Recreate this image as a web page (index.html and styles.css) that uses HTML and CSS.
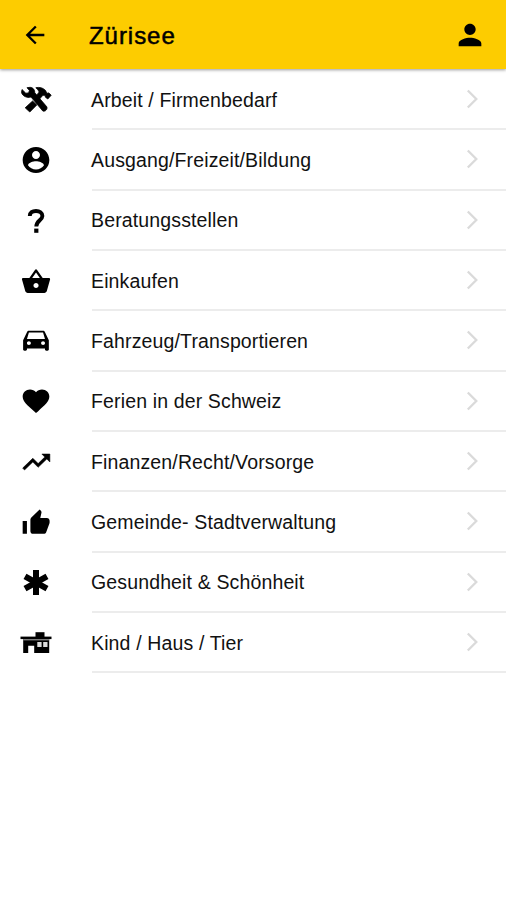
FILE: index.html
```html
<!DOCTYPE html>
<html lang="de">
<head>
    <meta charset="UTF-8">
    <meta name="viewport" content="width=device-width, initial-scale=1.0">
    <title>Zürisee</title>
    <link rel="stylesheet" href="styles.css">
</head>
<body>
    <svg class="sprite" aria-hidden="true">
        <symbol id="chevron" viewBox="0 0 12 20">
            <path d="M1.8 1.5L10.3 10L1.8 18.5" fill="none" stroke="#dadada" stroke-width="2.3"/>
        </symbol>
    </svg>

    <header class="toolbar">
        <svg class="back" viewBox="0 0 24 24"><path d="M20 11H7.83l5.59-5.59L12 4l-8 8 8 8 1.41-1.41L7.83 13H20v-2z"/></svg>
        <h1>Zürisee</h1>
        <svg class="profile" viewBox="0 0 24 24"><path d="M12 12c2.21 0 4-1.79 4-4s-1.79-4-4-4-4 1.79-4 4 1.79 4 4 4zm0 2c-2.67 0-8 1.34-8 4v2h16v-2c0-2.66-5.33-4-8-4z"/></svg>
    </header>

    <ul class="categories">
        <li>
            <svg class="icon" viewBox="0 0 32 32">
                <g stroke="#000" stroke-width=".8" stroke-linejoin="round">
                    <path d="M7 3.7L10.200 3.300C13 3.600 15 5.800 14.800 8.800L26.800 22.800C27.800 24.800 25.600 28 22.800 27L11 13C7 14.400 2.400 12 1.500 8.500L2 5.500L5.800 9.200L8.600 8.900L9.400 6.400z"/>
                    <path d="M12.600 17L16.800 20.900L9.800 28L5.200 23.800z"/>
                    <path d="M15.800 3.700C20 2.900 22.800 3.700 25.600 6.500L26.800 9.300L28.800 8.900L31.200 11.200L27.800 15L25.200 13L25.400 11.400L23 11.200L19 15.600L16 12L19.200 8C18.400 6.200 17.400 4.800 15.800 3.700z"/>
                </g>
            </svg>
            <span class="label">Arbeit / Firmenbedarf</span>
            <svg class="chevron"><use href="#chevron"/></svg>
        </li>
        <li>
            <svg class="icon" viewBox="0 0 24 24"><path d="M12 2.200C6.480 2.200 2 6.480 2 12s4.480 9.800 10 9.800 10-4.280 10-9.800S17.520 2.200 12 2.200zm0 3c1.660 0 3 1.340 3 3s-1.340 3-3 3-3-1.340-3-3 1.340-3 3-3zm0 14c-2.500 0-4.710-1.280-6-3.220.03-1.990 4-3.080 6-3.080 1.990 0 5.970 1.090 6 3.080-1.290 1.940-3.500 3.220-6 3.220z"/></svg>
            <span class="label">Ausgang/Freizeit/Bildung</span>
            <svg class="chevron"><use href="#chevron"/></svg>
        </li>
        <li>
            <svg class="icon" viewBox="0 0 32 32">
                <path d="M9.800 11C9.800 7.400 12.400 6 16 6S22.400 7.800 22.400 11C22.400 15 16.300 15.800 16.300 21.400" fill="none" stroke="#000" stroke-width="3.900"/>
                <path d="M14.200 23.600h4.200v4.200h-4.200z"/>
            </svg>
            <span class="label">Beratungsstellen</span>
            <svg class="chevron"><use href="#chevron"/></svg>
        </li>
        <li>
            <svg class="icon" viewBox="0 0 24 24"><path transform="translate(.5 1.400) scale(.96 .93)" d="M17.210 9l-4.380-6.560c-.19-.28-.51-.42-.83-.42-.32 0-.64.14-.83.43L6.790 9H2c-.55 0-1 .45-1 1 0 .09.01.18.04.27l2.540 9.270c.23.84 1 1.460 1.920 1.460h13c.92 0 1.690-.62 1.930-1.460l2.540-9.270L23 10c0-.55-.45-1-1-1h-4.790zM9 9l3-4.400L15 9H9zm3 8c-1.100 0-2-.9-2-2s.9-2 2-2 2 .9 2 2-.9 2-2 2z"/></svg>
            <span class="label">Einkaufen</span>
            <svg class="chevron"><use href="#chevron"/></svg>
        </li>
        <li>
            <svg class="icon" viewBox="0 0 24 24"><path transform="translate(.4 2.600) scale(.965 .88)" d="M18.920 3.010C18.720 2.420 18.160 2 17.500 2h-11c-.66 0-1.210.42-1.420 1.010L2 10v8c0 .55.45 1 1 1h1c.55 0 1-.45 1-1v-1h14v1c0 .55.45 1 1 1h1c.55 0 1-.45 1-1v-8l-3.080-6.990zM6.500 14c-.83 0-1.500-.67-1.500-1.500S5.670 11 6.500 11s1.500.67 1.500 1.500S7.330 14 6.500 14zm11 0c-.83 0-1.500-.67-1.500-1.500s.67-1.500 1.500-1.500 1.500.67 1.500 1.500-.67 1.500-1.500 1.500zM5 9l1.500-5.500h11L19 9H5z"/></svg>
            <span class="label">Fahrzeug/Transportieren</span>
            <svg class="chevron"><use href="#chevron"/></svg>
        </li>
        <li>
            <svg class="icon" viewBox="0 0 24 24"><path d="M12 21.350l-1.450-1.320C5.400 15.360 2 12.280 2 8.500 2 5.420 4.420 3 7.500 3c1.740 0 3.410.81 4.500 2.090C13.090 3.810 14.760 3 16.500 3 19.580 3 22 5.420 22 8.500c0 3.780-3.400 6.860-8.550 11.540L12 21.350z" transform="translate(0 -.2) scale(1 .96)"/></svg>
            <span class="label">Ferien in der Schweiz</span>
            <svg class="chevron"><use href="#chevron"/></svg>
        </li>
        <li>
            <svg class="icon" viewBox="0 0 24 24"><path d="M16.400 6l2.200 2.290-4.990 4.880-4-4L2 16.590 3.410 18l6.200-6 4 4 6.500-6.290L22.400 12V6z" stroke="#000" stroke-width=".4"/></svg>
            <span class="label">Finanzen/Recht/Vorsorge</span>
            <svg class="chevron"><use href="#chevron"/></svg>
        </li>
        <li>
            <svg class="icon" viewBox="0 0 24 24"><path d="M2 20.900h3.200V11.300H2v9.600zM22.200 11c0-1.100-.9-2-2-2h-5l.9-4 .03-.32c0-.41-.17-.79-.44-1.060L14.700 2.700 8.500 8.700C8.100 9.100 7.800 9.600 7.800 10.100v8.800c0 1.100.9 2 2 2h8c.83 0 1.540-.5 1.840-1.220l2.420-6.550c.09-.23.14-.47.14-.73V11z"/></svg>
            <span class="label">Gemeinde- Stadtverwaltung</span>
            <svg class="chevron"><use href="#chevron"/></svg>
        </li>
        <li>
            <svg class="icon" viewBox="0 0 32 32"><path d="M16 3v25M5 9.300l22 12.400M27 9.300L5 21.700" stroke="#000" stroke-width="6"/></svg>
            <span class="label">Gesundheit &amp; Schönheit</span>
            <svg class="chevron"><use href="#chevron"/></svg>
        </li>
        <li>
            <svg class="icon" viewBox="0 0 32 32">
                <path d="M15.500 5.200h9v5h-9z"/>
                <path d="M.5 9.600h31v2.500H.5z"/>
                <path d="M3.200 12h26v14H14.200v-7.200H8.200V26h-5z"/>
                <path d="M3.200 12.100h26v1.300h-26z" fill="#888"/>
                <path d="M17.300 15h4.300v5h-4.300zM23.200 15h4.300v5h-4.300z" fill="#ddd"/>
            </svg>
            <span class="label">Kind / Haus / Tier</span>
            <svg class="chevron"><use href="#chevron"/></svg>
        </li>
    </ul>
</body>
</html>
```

FILE: styles.css
```css
body {
    margin: 0;
    background: #fff;
    color: #000;
    font-family: "Liberation Sans", Arial, sans-serif;
}

.sprite {
    display: none;
}

.toolbar {
    display: flex;
    align-items: center;
    height: 69px;
    padding: 0 19px 0 21px;
    box-sizing: border-box;
    background: #fdcc00;
    box-shadow: 0 1px 3px rgba(0, 0, 0, 0.4);
}

.toolbar h1 {
    flex: 1;
    margin: 3px 0 0 40px;
    font-size: 24px;
    font-weight: normal;
    letter-spacing: 0.95px;
    -webkit-text-stroke: 0.5px #000;
}

.back {
    width: 28px;
    height: 28px;
}

.profile {
    width: 34px;
    height: 34px;
}

.categories {
    margin: 1px 0 0;
    padding: 0;
    list-style: none;
}

.categories li {
    display: grid;
    grid-template-columns: 72px 1fr 40px;
    grid-template-rows: 1fr 2px;
    align-items: center;
    height: 60.33px;
    padding-left: 20px;
}

.categories li::after {
    content: "";
    grid-column: 2 / -1;
    height: 2px;
    background: #ececec;
}

.icon {
    width: 32px;
    height: 32px;
    margin-top: 2px;
}

.label {
    margin: 2px 0 0 -1px;
    font-size: 19.5px;
    letter-spacing: 0.14px;
    color: #111;
}

.chevron {
    width: 12px;
    height: 20px;
}
```
